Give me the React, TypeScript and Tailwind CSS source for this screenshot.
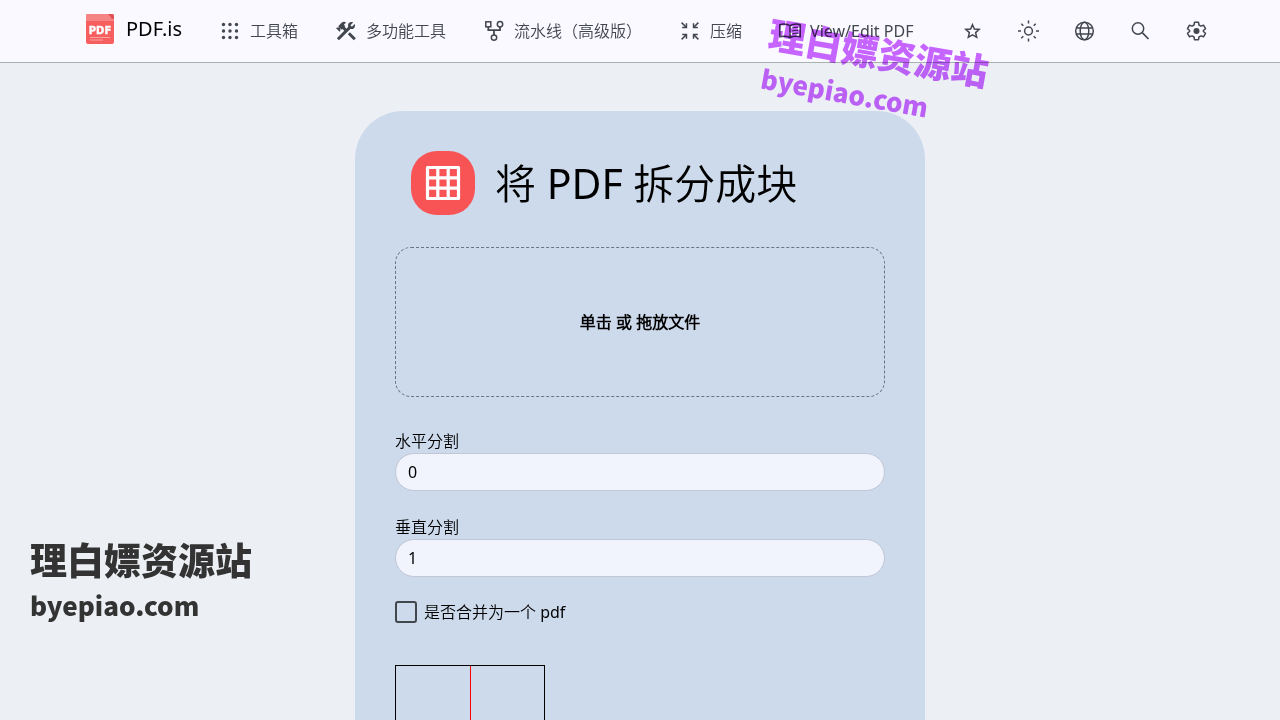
import { useState } from 'react';
import type { ReactNode } from 'react';

interface NavItem {
    label: string,
    icon: ReactNode
}

function Icon({ children }: { children: ReactNode }) {
    return (
        <svg viewBox="0 0 24 24" className="size-6 shrink-0" fill="none" stroke="currentColor" strokeWidth="1.5" aria-hidden="true">
            {children}
        </svg>
    );
}

const navItems: NavItem[] = [
    {
        label: "工具箱",
        icon: (
            <Icon>
                <g fill="currentColor" stroke="none">
                    {[5.5, 12, 18.5].map((y) => [5.5, 12, 18.5].map((x) => <circle key={`${x}-${y}`} cx={x} cy={y} r="1.7" />))}
                </g>
            </Icon>
        )
    },
    {
        label: "多功能工具",
        icon: (
            <Icon>
                {/* crossed hammer and wrench */}
                <g fill="currentColor" stroke="none">
                    <path d="m13.78 15.3 6 6 2.11-2.16-6-6-2.11 2.16Zm3.72-5.2c-.39 0-.81-.05-1.14-.19L4.97 21.25l-2.11-2.11 7.41-7.4L8.5 9.96l-.72.7-1.45-1.41v2.86l-.7.7L2.11 9.3l.7-.7h2.81L4.22 7.18l3.56-3.56c1.17-1.17 3.08-1.17 4.25 0L9.92 5.74l1.41 1.4-.71.71 1.79 1.78 1.82-1.88c-.14-.33-.2-.75-.2-1.12a3.49 3.49 0 0 1 3.5-3.52c.59 0 1.11.14 1.58.42l-2.67 2.68 1.5 1.5 2.67-2.67c.28.47.42.97.42 1.6 0 1.92-1.55 3.46-3.53 3.46Z" />
                </g>
            </Icon>
        )
    },
    {
        label: "流水线（高级版）",
        icon: (
            <Icon>
                <rect x="3.8" y="2.8" width="5" height="5" />
                <circle cx="18" cy="5.3" r="2.7" />
                <circle cx="12" cy="18.6" r="2.7" />
                <path d="M6.3 7.8v3.4H18V8M12 11.2v4.7" strokeWidth="1.8" />
            </Icon>
        )
    },
    {
        label: "压缩",
        icon: (
            <Icon>
                <path d="M3.6 3.6 8 8M20.4 3.6 16 8M3.6 20.4 8 16M20.4 20.4 16 16" />
                <g fill="currentColor" stroke="none">
                    <path d="M9.2 4.2v5h-5V7.7h2.2l1.3-1.3V4.2ZM14.8 4.2v5h5V7.7h-2.2l-1.3-1.3V4.2ZM9.2 19.8v-5h-5v1.5h2.2l1.3 1.3v2.2ZM14.8 19.8v-5h5v1.5h-2.2l-1.3 1.3v2.2Z" />
                </g>
            </Icon>
        )
    },
    {
        label: "View/Edit PDF",
        icon: (
            <Icon>
                <path d="M12 6.8C10 4.9 5 4.7 1.8 5.8v12c3.2-.9 8.200-.7 10.200 1 2-1.700 7-1.900 10.200-1v-12C19 4.700 14 4.900 12 6.800Zm0 0v12" />
                <path d="M14.200 9c1.800-.8 3.600-.9 5.800-.6M14.200 12c1.800-.8 3.600-.9 5.800-.6M14.200 15c1.800-.8 3.600-.9 5.800-.6" strokeWidth="1.200" />
            </Icon>
        )
    }
];

const actions: NavItem[] = [
    {
        label: "收藏",
        icon: <Icon><path d="m12.5 5.7 1.900 4.300 4.800.4-3.600 3.200 1.100 4.700-4.200-2.500-4.200 2.500 1.100-4.700-3.600-3.200 4.800-.4Z" /></Icon>
    },
    {
        label: "主题",
        icon: (
            <Icon>
                <circle cx="12.5" cy="12" r="3.9" />
                <path d="M12.5 1.500v3M12.5 19.500v3M2 12h3M20 12h3M5.300 4.800l2 2M17.700 17.200l2 2M19.700 4.800l-2 2M7.300 17.200l-2 2" />
            </Icon>
        )
    },
    {
        label: "语言",
        icon: (
            <Icon>
                <circle cx="12.5" cy="12" r="8.8" />
                <ellipse cx="12.5" cy="12" rx="4.3" ry="8.8" />
                <path d="M4.300 9h16.400M4.300 15h16.400" />
            </Icon>
        )
    },
    {
        label: "搜索",
        icon: (
            <Icon>
                <circle cx="10" cy="9.5" r="5.7" />
                <path d="m14.200 13.700 6.300 6.300" strokeWidth="1.7" />
            </Icon>
        )
    },
    {
        label: "设置",
        icon: (
            <Icon>
                <path d="M10.500 3.300h4l.5 2.700 1.900 1.100 2.600-.9 2 3.500-2.100 1.800v1l2.100 1.800-2 3.500-2.600-.9-1.900 1.100-.5 2.700h-4L10 18l-1.900-1.100-2.600.9-2-3.500 2.100-1.800v-1L3.500 9.700l2-3.500 2.600.9L10 6Z" strokeLinejoin="round" />
                <circle cx="12.5" cy="12" r="3" fill="currentColor" stroke="none" />
            </Icon>
        )
    }
];

function Logo() {
    return (
        <svg viewBox="0 0 28 30" className="h-[30px] w-7 shrink-0" aria-hidden="true">
            <rect width="28" height="30" rx="2" fill="#f75f5f" />
            <path d="M2 0h21l5 5v2H0V2a2 2 0 0 1 2-2Z" fill="#f58585" />
            <path d="M22 0h4a2 2 0 0 1 2 2v3h-2Z" fill="#e05353" />
            <text x="14" y="20" textAnchor="middle" fill="#fff" stroke="#fff" strokeWidth="0.4" fontSize="10" fontWeight="700" fontFamily="DejaVu Sans, sans-serif">PDF</text>
            <path d="M4 23.500h20M4 26h13" stroke="#f9a3a3" strokeWidth="1" />
        </svg>
    );
}

function Navbar() {
    return (
        <header className="border-b border-[#a9b0b0] bg-[#faf9ff] text-[#42474e]">
            <div className="flex h-[62px] items-center pr-14 pl-[86px]">
                <a href="#" className="mb-1 flex items-center gap-3 text-xl text-black">
                    <Logo />
                    PDF.is
                </a>
                <nav className="ml-9 flex flex-1 items-center gap-9">
                    {navItems.map((item) => (
                        <a key={item.label} href="#" className="flex items-center gap-2 whitespace-nowrap">
                            {item.icon}
                            {item.label}
                        </a>
                    ))}
                </nav>
                <div className="flex">
                    {actions.map((item) => (
                        <button key={item.label} type="button" aria-label={item.label} className="px-4 py-2">
                            {item.icon}
                        </button>
                    ))}
                </div>
            </div>
        </header>
    );
}

function NumberField({ id, label, value, onChange }: { id: string, label: string, value: string, onChange: (v: string) => void }) {
    return (
        <div className="mb-6">
            <label htmlFor={id} className="block leading-6">{label}</label>
            <input
                id={id}
                type="text"
                inputMode="numeric"
                value={value}
                onChange={(e) => onChange(e.target.value)}
                className="block h-[38px] w-full rounded-full border border-[#c2c7d6] bg-[#f1f3fd] px-3"
            />
        </div>
    );
}

export default function App() {
    const [horizontal, setHorizontal] = useState("0");
    const [vertical, setVertical] = useState("1");
    const [merge, setMerge] = useState(false);

    return (
        <div className="relative flex h-screen flex-col overflow-hidden bg-[#eceff4] font-['Noto_Sans','Noto_Sans_CJK_SC_DemiLight','Noto_Sans_CJK_SC_Light','Noto_Sans_CJK_SC',sans-serif] text-base text-black">
            <Navbar />

            <main className="min-h-0 flex-1 px-4 pt-12">
                <div className="mx-auto max-w-[570px] rounded-[48px] bg-[#cddaeb] p-10">
                    <div className="mb-8 flex items-center gap-5 pl-4">
                        <svg viewBox="0 0 64 64" className="size-16 shrink-0" aria-hidden="true">
                            <rect width="64" height="64" rx="26" fill="#f95455" />
                            <path d="M16.500 16.500h31v31h-31ZM26.800 16.500v31M37.200 16.500v31M16.500 26.800h31M16.500 37.200h31" fill="none" stroke="#fff" strokeWidth="3.2" strokeLinejoin="round" />
                        </svg>
                        <h1 className="text-[41px] leading-[64px]">将 PDF 拆分成块</h1>
                    </div>

                    <button type="button" className="mb-8 flex h-[150px] w-full items-center justify-center rounded-2xl border border-dashed border-[#6b7480] font-bold">
                        单击 或 拖放文件
                    </button>

                    <NumberField id="horizontal" label="水平分割" value={horizontal} onChange={setHorizontal} />
                    <NumberField id="vertical" label="垂直分割" value={vertical} onChange={setVertical} />

                    <div className="mb-[42px] flex h-[22px] items-center gap-[7px]">
                        <input
                            id="merge"
                            type="checkbox"
                            checked={merge}
                            onChange={(e) => setMerge(e.target.checked)}
                            className="size-[22px] appearance-none rounded-[3px] border-2 border-[#42474e] checked:bg-[#42474e]"
                        />
                        <label htmlFor="merge">是否合并为一个 pdf</label>
                    </div>

                    {/* split preview */}
                    <div className="flex h-[212px] w-[150px] border border-black">
                        <div className="flex-1 border-r border-[#ff0000]"></div>
                        <div className="flex-1"></div>
                    </div>
                </div>
            </main>

            {/* watermarks */}
            <div className="pointer-events-none absolute top-[535px] left-[30px] font-['Noto_Sans_CJK_SC',sans-serif] font-black whitespace-nowrap text-[#333333]">
                <p className="text-[37px] leading-[48px]">理白嫖资源站</p>
                <p className="text-[26px] leading-[44px]">byepiao.com</p>
            </div>
            <div className="pointer-events-none absolute top-[27px] left-[764px] rotate-[10deg] font-['Noto_Sans_CJK_SC',sans-serif] font-black whitespace-nowrap text-[#c966ff] mix-blend-multiply">
                <p className="text-[37px] leading-[48px]">理白嫖资源站</p>
                <p className="text-[26px] leading-[44px]">byepiao.com</p>
            </div>
        </div>
    );
}
